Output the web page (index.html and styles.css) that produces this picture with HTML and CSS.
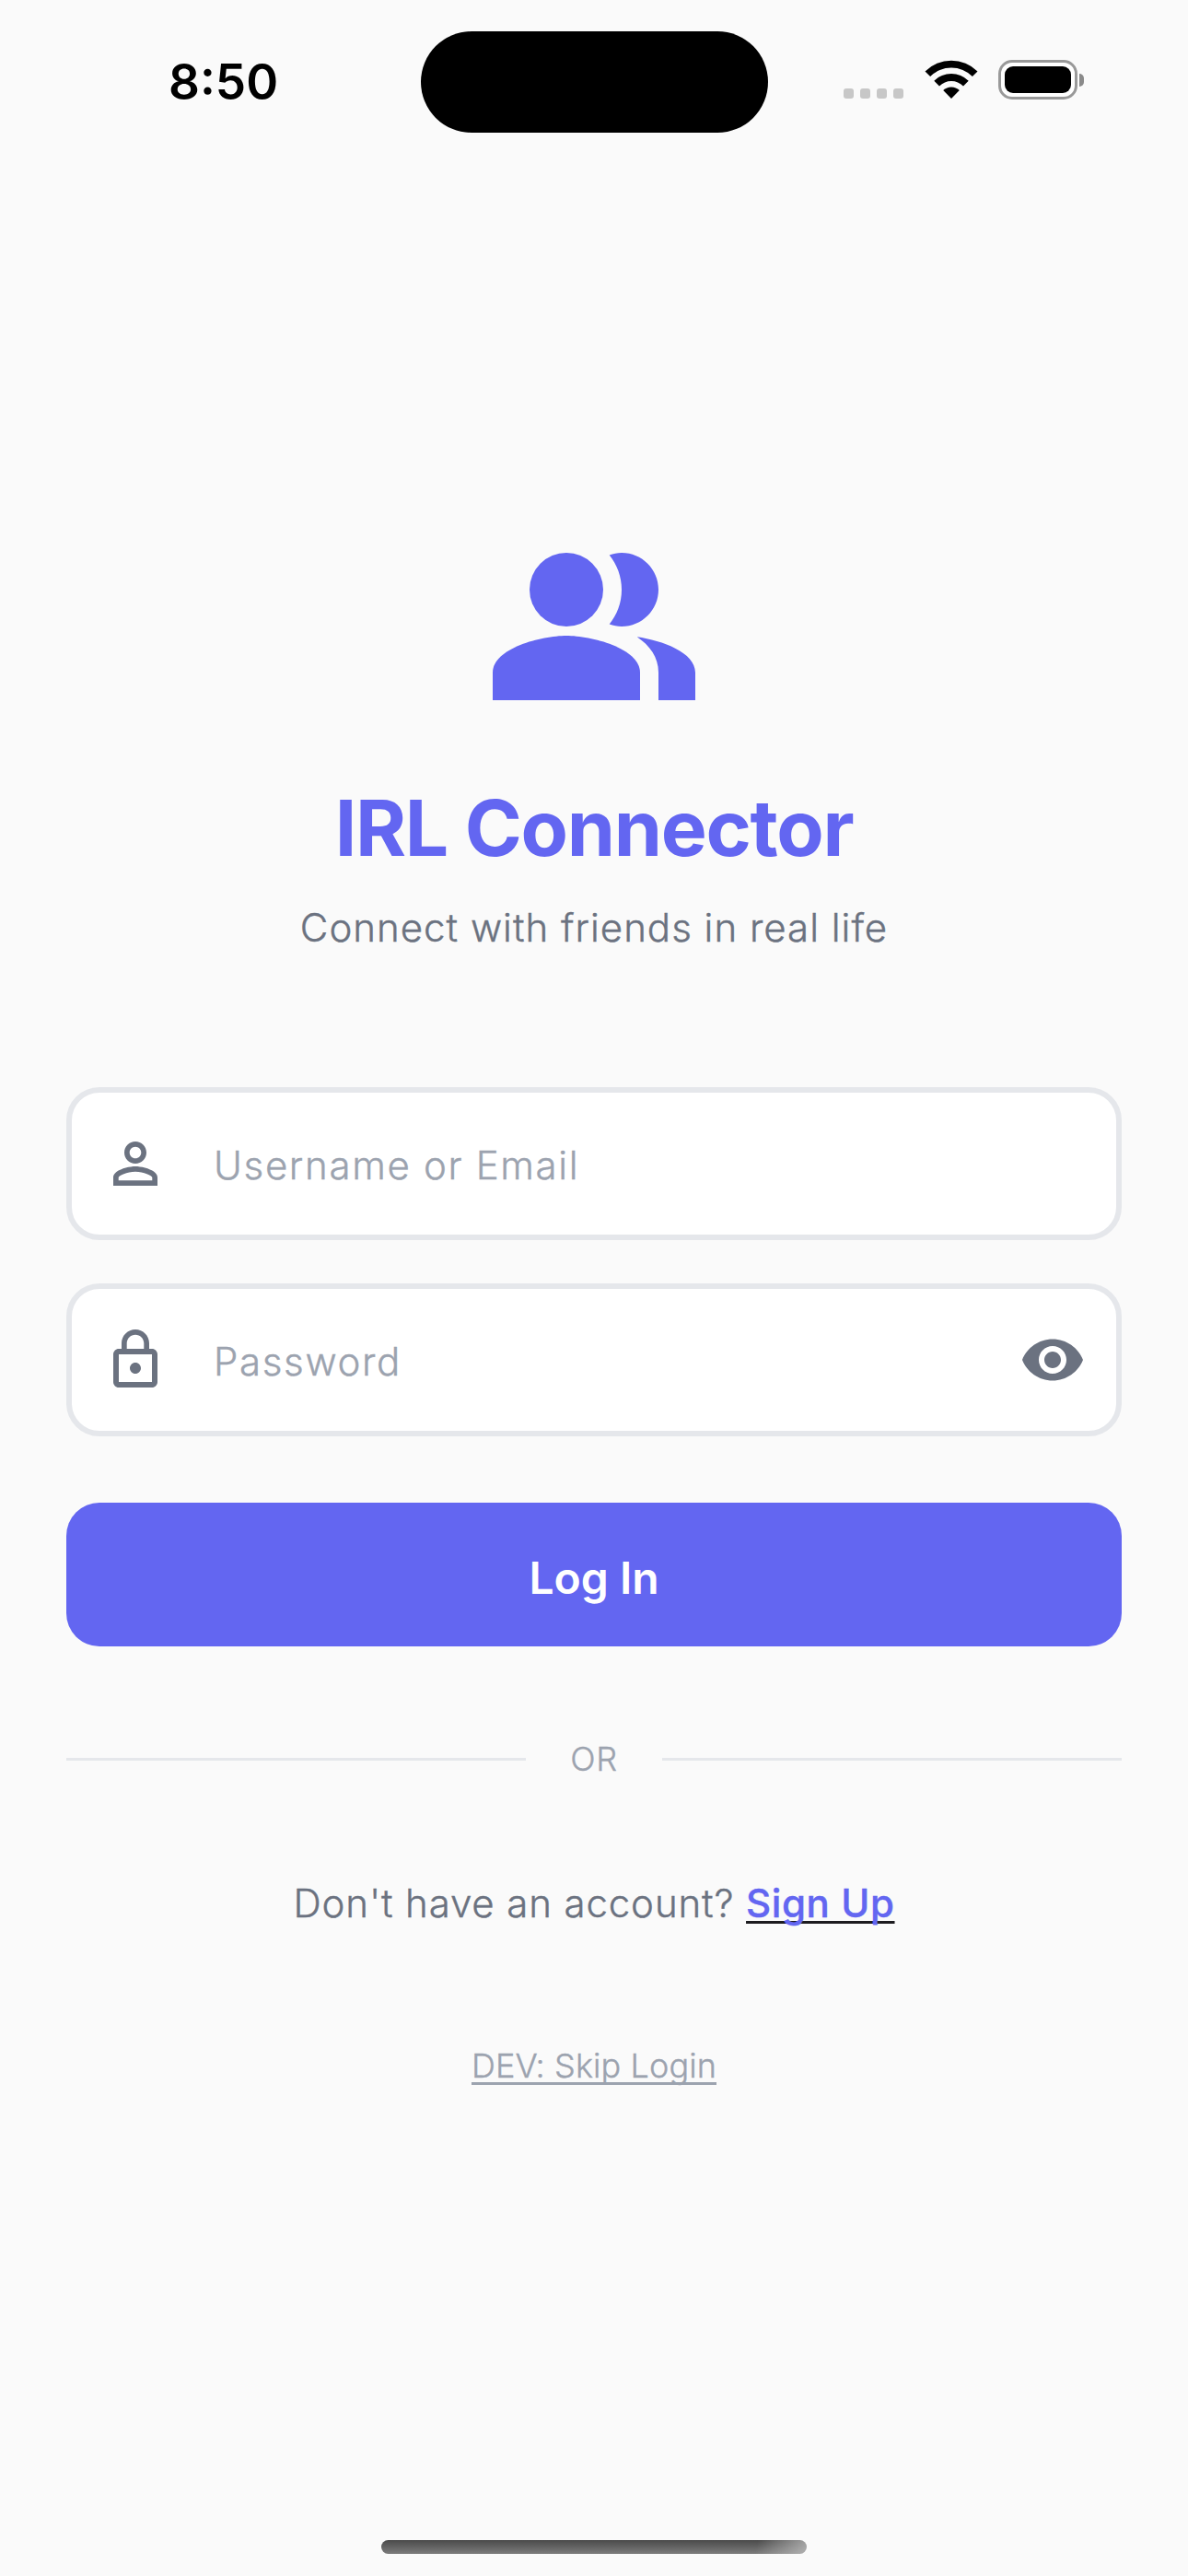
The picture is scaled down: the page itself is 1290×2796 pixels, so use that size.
FILE: index.html
```
<!DOCTYPE html>
<html lang="en">
<head>
    <meta charset="UTF-8">
    <meta name="viewport" content="width=device-width, initial-scale=1.0">
    <title>IRL Connector</title>
    <link rel="stylesheet" href="styles.css">
</head>
<body>
    <div id="statusbar">
        <div class="time">8:50</div>
        <div class="island"></div>
        <div class="status-icons">
            <div class="signal"><i></i><i></i><i></i><i></i></div>
            <svg class="wifi" viewBox="0 0 58 43">
                <path d="M0.5 12.5a40.5 40.5 0 0 1 57 0l-5.6 5.6a32.4 32.4 0 0 0-45.8 0z"/>
                <path d="M10.3 22.8a26.5 26.5 0 0 1 37.4 0l-5.7 5.6a18.6 18.6 0 0 0-26 0z"/>
                <path d="M20.2 33a12.6 12.6 0 0 1 17.6 0L29 42z"/>
            </svg>
            <div class="battery"><div class="level"></div></div>
            <div class="battery-cap"></div>
        </div>
    </div>

    <main id="container">
        <svg class="logo" viewBox="0 0 24 24">
            <path d="M16.67 13.13C18.04 14.06 19 15.32 19 17v3h4v-3c0-2.18-3.57-3.47-6.33-3.87z"/>
            <circle cx="9" cy="8" r="4"/>
            <path d="M15 12c2.21 0 4-1.79 4-4s-1.79-4-4-4c-.47 0-.91.1-1.33.24C14.5 5.27 15 6.58 15 8s-.5 2.73-1.33 3.76c.42.14.86.24 1.33.24z"/>
            <path d="M9 13c-2.67 0-8 1.34-8 4v3h16v-3c0-2.66-5.33-4-8-4z"/>
        </svg>
        <h1>IRL Connector</h1>
        <p class="subtitle">Connect with friends in real life</p>

        <form>
            <div class="field">
                <svg class="icon" viewBox="0 0 24 24">
                    <path d="M12 5.9c1.16 0 2.1.94 2.1 2.1s-.94 2.1-2.1 2.1S9.9 9.16 9.9 8s.94-2.1 2.1-2.1m0 9c2.97 0 6.1 1.46 6.1 2.1v1.1H5.9V17c0-.64 3.13-2.1 6.1-2.1M12 4C9.79 4 8 5.79 8 8s1.79 4 4 4 4-1.79 4-4-1.79-4-4-4zm0 9c-2.67 0-8 1.34-8 4v3h16v-3c0-2.66-5.33-4-8-4z"/>
                </svg>
                <input type="text" placeholder="Username or Email">
            </div>
            <div class="field">
                <svg class="icon" viewBox="0 0 24 24">
                    <path d="M12 17c1.1 0 2-.9 2-2s-.9-2-2-2-2 .9-2 2 .9 2 2 2zm6-9h-1V6c0-2.76-2.24-5-5-5S7 3.24 7 6v2H6c-1.1 0-2 .9-2 2v10c0 1.1.9 2 2 2h12c1.1 0 2-.9 2-2V10c0-1.1-.9-2-2-2zM8.9 6c0-1.71 1.39-3.1 3.1-3.1s3.1 1.39 3.1 3.1v2H8.9V6zM18 20H6V10h12v10z"/>
                </svg>
                <input type="password" placeholder="Password">
                <svg class="icon" viewBox="0 0 24 24">
                    <path d="M12 4.5C7 4.5 2.73 7.61 1 12c1.73 4.39 6 7.5 11 7.5s9.27-3.11 11-7.5c-1.73-4.39-6-7.5-11-7.5zM12 17c-2.76 0-5-2.24-5-5s2.24-5 5-5 5 2.24 5 5-2.24 5-5 5zm0-8c-1.66 0-3 1.34-3 3s1.34 3 3 3 3-1.34 3-3-1.34-3-3-3z"/>
                </svg>
            </div>
            <button type="button" class="login">Log In</button>
        </form>

        <div class="divider"><span>OR</span></div>

        <p class="signup">Don't have an account? <a href="#">Sign Up</a></p>
        <a class="skip" href="#">DEV: Skip Login</a>
    </main>

    <div id="home-indicator"></div>
</body>
</html>
```
FILE: styles.css
```
*{
    margin: 0;
    padding: 0;
    box-sizing: border-box;
}
body{
    height: 2796px;
    display: flex;
    flex-direction: column;
    background-color: #fafafa;
    font-family: Inter, "Liberation Sans", sans-serif;
    font-weight: 300;
    overflow: hidden;
}

/* status bar */
#statusbar{
    height: 177px;
    display: grid;
    grid-template-columns: 1fr 377px 1fr;
    align-items: center;
}
.time{
    padding-left: 183px;
    font-size: 53px;
    font-weight: 600;
    line-height: 60px;
    color: black;
}
.island{
    height: 110px;
    margin-top: 1px;
    border-radius: 55px;
    background-color: black;
}
.status-icons{
    display: flex;
    align-items: center;
    padding-left: 82px;
    margin-top: -4px;
}
.signal{
    display: flex;
    gap: 7px;
    margin-top: 30px;
    margin-right: 23px;
}
.signal i{
    width: 11px;
    height: 11px;
    border-radius: 3px;
    background-color: #c7c7c7;
}
.wifi{
    width: 58px;
    height: 43px;
    margin-right: 22px;
}
.battery{
    width: 86px;
    height: 43px;
    padding: 4px;
    border: 3px solid #999;
    border-radius: 15px;
    background-color: white;
}
.level{
    height: 29px;
    border-radius: 9px;
    background-color: black;
}
.battery-cap{
    width: 5px;
    height: 14px;
    margin-left: 2px;
    border-radius: 0 5px 5px 0;
    background-color: #8a8a8a;
}

/* login */
#container{
    flex: 1;
    display: flex;
    flex-direction: column;
    align-items: center;
    padding: 383px 72px 0;
}
.logo{
    width: 240px;
    height: 240px;
    fill: #6366f1;
}
h1{
    margin-top: 48px;
    font-size: 84px;
    line-height: 102px;
    font-weight: 700;
    letter-spacing: -1.3px;
    color: #6366f1;
}
/* a bit heavier than the light cut */
.subtitle,
.signup,
.divider,
.skip,
input{
    -webkit-text-stroke-width: 0.4px;
}
.subtitle{
    margin-top: 27px;
    font-size: 42px;
    line-height: 60px;
    letter-spacing: 1px;
    color: #6b7280;
}
form{
    width: 100%;
    margin-top: 143px;
}
.field{
    height: 166px;
    margin-bottom: 47px;
    padding: 0 33px;
    display: flex;
    align-items: center;
    background-color: white;
    border: 6px solid #e5e7eb;
    border-radius: 36px;
}
.icon{
    width: 72px;
    height: 72px;
    fill: #6b7280;
}
input{
    flex: 1;
    height: 60px;
    margin: 2px 0 0 49px;
    border: none;
    outline: none;
    background: none;
    font-family: inherit;
    font-size: 42px;
    font-weight: inherit;
    letter-spacing: 1.65px;
}
input::placeholder{
    color: #9ca3af;
}
.login{
    display: block;
    width: 100%;
    height: 156px;
    margin-top: 72px;
    padding-top: 6px;
    border: none;
    border-radius: 36px;
    background-color: #6366f1;
    color: white;
    font-family: inherit;
    font-size: 48px;
    font-weight: 600;
}
.divider{
    width: 100%;
    height: 54px;
    margin-top: 95px;
    display: flex;
    align-items: center;
    font-size: 36px;
    line-height: 54px;
    color: #9ca3af;
}
.divider::before,
.divider::after{
    content: "";
    flex: 1;
    height: 3px;
    background-color: #e5e7eb;
}
.divider span{
    padding: 0 48px;
    letter-spacing: 0.75px;
}
.signup{
    margin-top: 100px;
    font-size: 42px;
    line-height: 60px;
    letter-spacing: 0.87px;
    color: #6b7280;
}
.signup a{
    color: #6366f1;
    font-weight: 500;
    letter-spacing: 0.6px;
    text-decoration: underline #1c1b1f 3px;
    text-decoration-skip-ink: none;
    text-underline-offset: 4px;
}
.skip{
    margin-top: 119px;
    font-size: 36px;
    line-height: 54px;
    letter-spacing: 0.1px;
    color: #9ca3af;
    text-decoration: underline 3px;
    text-decoration-skip-ink: none;
    text-underline-offset: 5px;
}

#home-indicator{
    width: 462px;
    height: 15px;
    margin: 0 auto 24px;
    border-radius: 8px;
    background: linear-gradient(100deg, transparent 88%, rgba(200, 200, 200, 0.7)), linear-gradient(#4a4a4a, #7c7c7c);
}
```
